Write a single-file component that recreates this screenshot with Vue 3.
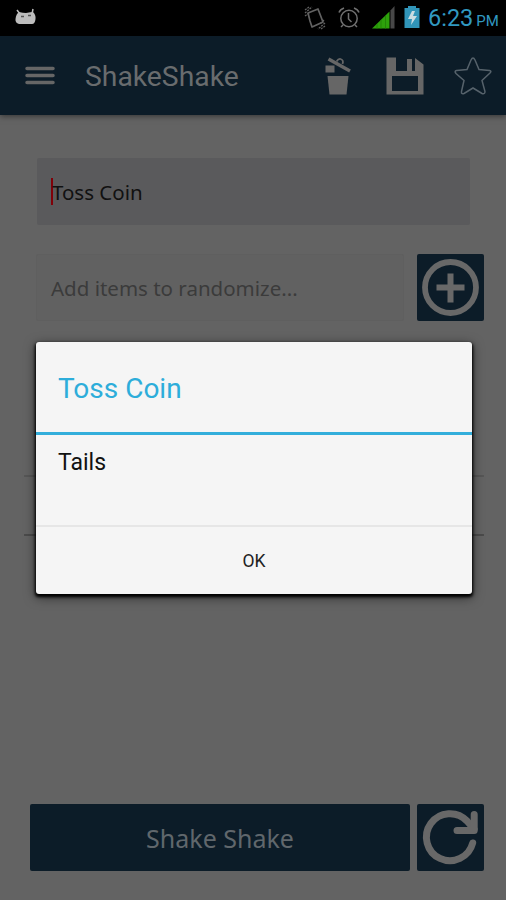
<template>
  <div class="screen">
    <header class="status-bar">
      <svg class="droid" width="22" height="18" viewBox="0 0 22 18">
        <path d="M2 2l3 4M18 1l-1 5" stroke="#bdbdbd" stroke-width="1.5" />
        <path d="M4 4Q8 5 11 5Q16 4 18 4Q21 7 20.500 11Q20 16 17 16H4Q0 15 0.500 11Q1 6 4 4Z" fill="#bdbdbd" />
        <path d="M6 8.500h3M13 7.500h3" stroke="#555" stroke-width="1.400" />
      </svg>
      <svg class="vibrate" width="22" height="26" viewBox="0 0 22 26">
        <path d="M4 8L14 4L19 17L8 22L6 16Z" fill="none" stroke="#626262" stroke-width="1.700" stroke-linejoin="round" />
        <path d="M1 8L8 2M1 11L5 8M1 5L5 2M21 18L14 24M21 21L17 24M20 15L16 19" stroke="#626262" stroke-width="1.300" stroke-dasharray="2 1" />
      </svg>
      <svg class="alarm" width="22" height="22" viewBox="0 0 22 22" fill="none" stroke="#707070" stroke-width="1.500">
        <circle cx="11" cy="11.500" r="8.200" />
        <path d="M10.500 6v6l3 3M1 5.500Q2 2.500 6 1M16 1Q20 2.500 21 5.500M5 18l-2 2M17 18l2 2" />
      </svg>
      <svg class="signal" width="24" height="23" viewBox="0 0 24 23">
        <path d="M18.500 4.500L22.500 0V22.500H18.500Z" fill="#484848" />
        <path d="M0 22.500L17.500 5.500V22.500Z" fill="#2da10b" />
        <path d="M5 18v4.500M9 14v8.500M13.500 10v12.500" stroke="#238507" />
      </svg>
      <svg class="battery" width="16" height="22" viewBox="0 0 16 22">
        <path d="M4 0h8v2h3.500v20H0.500V2H4Z" fill="#3195b9" />
        <path d="M8 5L4 13h4l-1 6 6-9H9l2-5Z" fill="#c9dce2" />
      </svg>
      <span class="clock">6:23<small>PM</small></span>
    </header>

    <nav class="app-bar">
      <svg class="menu-icon" width="30" height="20" viewBox="0 0 30 20">
        <path d="M2 2.500h26M2 9.500h26M2 16.500h26" stroke="#666" stroke-width="3.500" stroke-linecap="round" />
      </svg>
      <h1>ShakeShake</h1>
      <svg class="trash-icon" width="28" height="40" viewBox="0 0 28 40">
        <path d="M3.500 20h21l-2 18.500h-17Z" fill="#666" />
        <path d="M1.500 9.500h9v7h-9Z" fill="#666" />
        <path d="M4.500 3L26 15" stroke="#666" stroke-width="3.500" />
        <path d="M12.500 5.500q2-3 4-2.500q3.500 1 2 5" fill="none" stroke="#666" stroke-width="1.800" />
      </svg>
      <svg class="save-icon" width="38" height="38" viewBox="0 0 38 38">
        <path d="M0.500 0.500H10V14H29V1L37.500 7.500V37.500H0.500ZM6 19V34H32V19Z" fill="#666" fill-rule="evenodd" />
        <path d="M21 2h5v12h-5Z" fill="#666" />
      </svg>
      <svg class="star-icon" width="40" height="40" viewBox="0 0 40 40">
        <path d="M20 2Q21 2 22 4L26 13.500L36.500 14.500Q39 15 37 17L29 24.500L32 35.500Q32 38.500 29 37.500L20 32L11 37.500Q8 38.500 8.500 35.500L11 24.500L3 17.500Q1 15 3.500 14.500L14 13.500L18 4Q19 2 20 2Z" fill="none" stroke="#56626b" stroke-width="1.500" />
      </svg>
    </nav>

    <main class="content">
      <div class="title-field"><i class="caret"></i><span>{{ title }}</span></div>
      <div class="add-row">
        <div class="item-field"><span>Add items to randomize...</span></div>
        <button class="square-btn">
          <svg width="67" height="67" viewBox="0 0 67 67" fill="none" stroke="#686868">
            <circle cx="33.500" cy="33.500" r="25.500" stroke-width="5.800" />
            <path d="M19.500 33.500h28M33.500 19.500v29" stroke-width="6" />
          </svg>
        </button>
      </div>
      <ul class="items">
        <li v-for="n in 3" :key="n"></li>
      </ul>
      <footer class="actions">
        <button class="shake-btn"><span>Shake Shake</span></button>
        <button class="square-btn">
          <svg width="67" height="67" viewBox="0 0 67 67" fill="none" stroke="#686868" stroke-width="7" stroke-linecap="round" stroke-linejoin="round">
            <path d="M55.700 39A23.500 23.500 0 1 1 50 17L57 25" />
            <path d="M57.200 10.500V26.500H40" />
          </svg>
        </button>
      </footer>
    </main>

    <section class="dialog">
      <h2><span>{{ title }}</span></h2>
      <p><span>{{ result }}</span></p>
      <button><span>OK</span></button>
    </section>
  </div>
</template>

<script setup>
import { ref } from 'vue'

const title = ref('Toss Coin')
const result = ref('Tails')
</script>

<style>
body {
  margin: 0;
  background: #636363;
}
</style>

<style scoped>
* {
  box-sizing: border-box;
}

.screen {
  position: relative;
  display: flex;
  flex-direction: column;
  width: 506px;
  height: 900px;
  background: #636363;
  font-family: Roboto, sans-serif;
  overflow: hidden;
}

svg {
  display: block;
  flex: none;
}

button {
  display: flex;
  align-items: center;
  justify-content: center;
  border: none;
  padding: 0;
}

.status-bar {
  display: flex;
  align-items: center;
  height: 36px;
  padding-left: 15px;
  background: #000;
}

.droid {
  margin-top: -2px;
}

.vibrate {
  margin-left: 267px;
}

.alarm {
  margin-left: 12px;
}

.signal {
  margin-left: 12px;
  margin-top: -2px;
}

.battery {
  margin-left: 8px;
  margin-top: -2px;
}

.clock {
  margin: 2px 0 0 8px;
  font-size: 23.5px;
  line-height: 36px;
  color: #3199c0;
  white-space: nowrap;
}

.clock small {
  margin-left: 3px;
  font-size: 15px;
}

.app-bar {
  display: flex;
  align-items: center;
  height: 79px;
  padding-left: 25px;
  background: #0c1c28;
  box-shadow: 0 1px 6px rgba(0, 0, 0, 0.5);
}

.app-bar h1 {
  width: 155px;
  margin: 1px 0 0 30px;
  font-size: 28.300px;
  font-weight: 400;
  color: #696c6e;
}

.trash-icon {
  margin-left: 84px;
}

.save-icon {
  margin-left: 34px;
}

.star-icon {
  margin-left: 29px;
}

.content {
  display: flex;
  flex: 1;
  flex-direction: column;
  padding: 43px 22px 29px 30px;
  font-family: "Noto Sans", sans-serif;
}

.title-field {
  display: flex;
  align-items: center;
  height: 67px;
  margin: 0 14px 0 7px;
  padding-left: 14px;
  border-radius: 2px;
  background: #5a5a5c;
  color: #111;
  font-size: 20.500px;
}

.caret {
  width: 2px;
  height: 27px;
  margin-right: -1px;
  background: #800008;
}

.add-row {
  display: flex;
  justify-content: space-between;
  margin: 29px 0 0 6px;
}

.item-field {
  display: flex;
  align-items: center;
  width: 368px;
  height: 67px;
  padding-left: 14px;
  border: 1px solid #5f5f5f;
  border-radius: 2px;
  background: #616161;
  color: #3b3b3b;
  font-size: 20.500px;
  white-space: nowrap;
}

.square-btn {
  width: 67px;
  height: 67px;
  border-radius: 2px;
  background: #0c1c28;
}

.items {
  flex: 1;
  margin: 97px 0 0 -6px;
  padding: 0;
  list-style: none;
}

.items li {
  height: 59px;
}

.items li:nth-child(1) {
  border-bottom: 2px solid #565656;
}

.items li:nth-child(2) {
  border-bottom: 2px solid #4b4b4b;
}

.actions {
  display: flex;
  justify-content: space-between;
}

.shake-btn {
  width: 380px;
  height: 67px;
  border-radius: 2px;
  background: #0c1c28;
  color: #60676c;
  font-family: "Noto Sans", sans-serif;
  font-size: 25px;
}

.dialog {
  position: absolute;
  top: 342px;
  left: 36px;
  width: 436px;
  height: 252px;
  border-radius: 3px;
  background: #f5f5f5;
  box-shadow: 0 2px 3px 1px #000, 0 3px 12px rgba(0, 0, 0, 0.6);
}

.dialog h2 {
  height: 93px;
  margin: 0;
  padding-left: 22px;
  border-bottom: 3px solid #33aedb;
  color: #2dadda;
  font-size: 28px;
  font-weight: 400;
  line-height: 93px;
}

.dialog p {
  height: 92px;
  margin: 0;
  padding: 14px 22px;
  border-bottom: 2px solid #e6e6e6;
  color: #111;
  font-size: 23px;
  line-height: 28px;
}

.dialog button {
  width: 100%;
  height: 67px;
  background: none;
  color: #222;
  font-family: Roboto, sans-serif;
  font-size: 17.500px;
}
</style>
